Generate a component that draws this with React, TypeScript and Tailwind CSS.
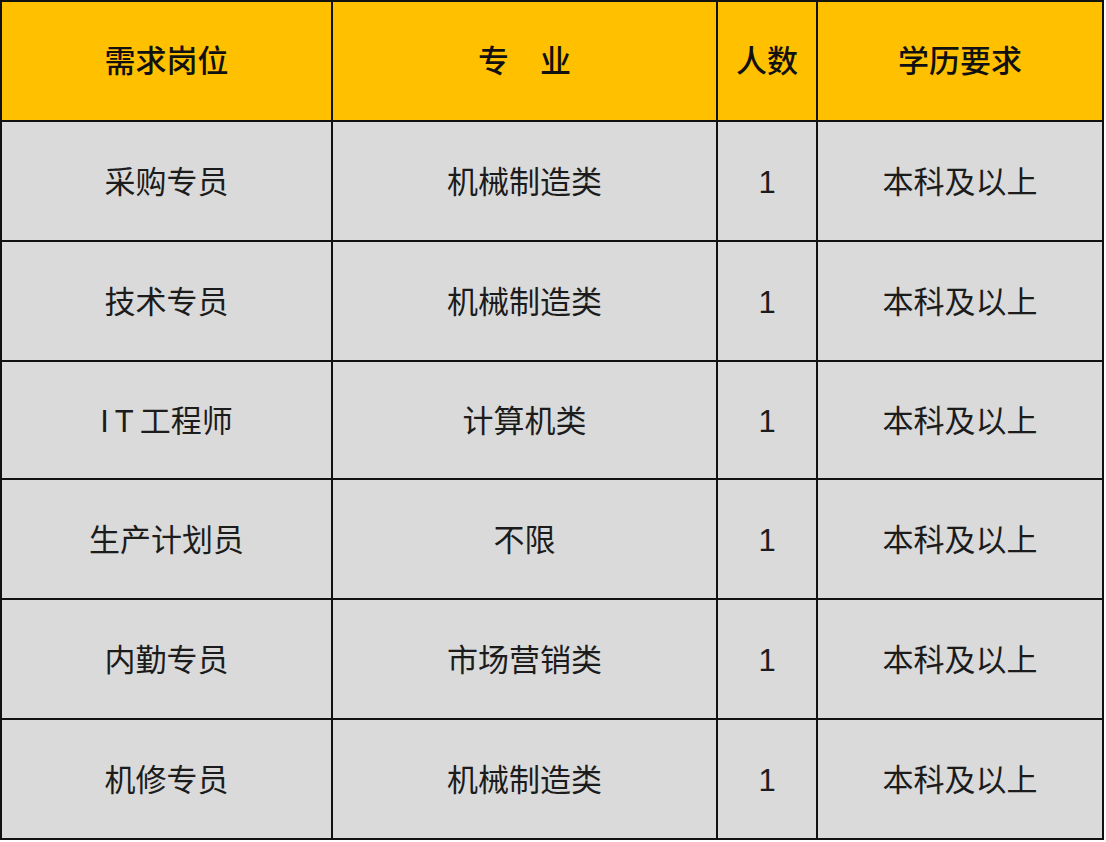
import React from "react";

const rows: [string, string, string, string][] = [
  ["采购专员", "机械制造类", "1", "本科及以上"],
  ["技术专员", "机械制造类", "1", "本科及以上"],
  ["IT工程师", "计算机类", "1", "本科及以上"],
  ["生产计划员", "不限", "1", "本科及以上"],
  ["内勤专员", "市场营销类", "1", "本科及以上"],
  ["机修专员", "机械制造类", "1", "本科及以上"],
];

const heights = ["h-[118px]", "h-[118px]", "h-[116px]", "h-[118px]", "h-[118px]", "h-[118px]"];

export default function App() {
  const font = { fontFamily: '"Liberation Sans", "Noto Sans CJK SC", sans-serif' };
  return (
    <div className="w-[1106px] h-[842px] bg-white" style={font}>
      <div className="w-[1104px] bg-[#111] p-[2px] flex flex-col gap-[2px]">
        <div className="grid grid-cols-[329px_383px_98px_284px] gap-[2px] h-[118px]">
          {["需求岗位", "专　业", "人数", "学历要求"].map((t) => (
            <div
              key={t}
              className="bg-[#ffc000] flex items-center justify-center pt-[2px] text-[31px] font-medium text-[#111]"
            >
              {t}
            </div>
          ))}
        </div>
        {rows.map((r, i) => (
          <div
            key={i}
            className={`grid grid-cols-[329px_383px_98px_284px] gap-[2px] ${heights[i]}`}
          >
            {r.map((c, j) => (
              <div
                key={j}
                className="bg-[#dadada] flex items-center justify-center pt-[4px] text-[31px] text-[#1c1c1c]"
              >
                {c === "IT工程师" ? (
                  <span>
                    <span className="tracking-[6px]">IT</span>工程师
                  </span>
                ) : (
                  c
                )}
              </div>
            ))}
          </div>
        ))}
      </div>
    </div>
  );
}
